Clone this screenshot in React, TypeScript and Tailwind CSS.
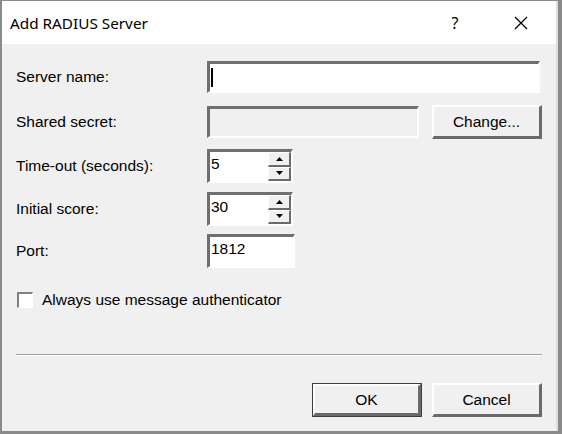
import React from "react";

const sunken =
  "border-t-[3px] border-l-[3px] border-b-2 border-r-2 border-t-[#6f6f6f] border-l-[#6f6f6f] border-b-white border-r-white";

function Raised({ children, className = "" }: { children: React.ReactNode; className?: string }) {
  return (
    <div
      className={
        "flex items-center justify-center bg-[#f0f0f0] border-t-2 border-l-2 border-b-[3px] border-r-[3px] border-t-white border-l-white border-b-[#6a6a6a] border-r-[#6a6a6a] " +
        className
      }
    >
      {children}
    </div>
  );
}

function SpinBtn({ up }: { up: boolean }) {
  return (
    <div className="flex-1 flex items-center justify-center bg-[#f0f0f0] border-t border-l border-b-2 border-r-2 border-t-white border-l-white border-b-[#6a6a6a] border-r-[#6a6a6a]">
      <svg width="7" height="4" viewBox="0 0 7 4">
        {up ? <polygon points="3.5,0 7,4 0,4" fill="#000" /> : <polygon points="0,0 7,0 3.5,4" fill="#000" />}
      </svg>
    </div>
  );
}

function Spinner({ value }: { value: string }) {
  return (
    <div className={"w-[86px] h-[34px] bg-white flex " + sunken}>
      <div className="flex-1 pl-[1px] pt-[2px] leading-[20px] text-black">{value}</div>
      <div className="w-[23px] flex flex-col">
        <SpinBtn up />
        <SpinBtn up={false} />
      </div>
    </div>
  );
}

export default function App() {
  return (
    <div
      className="w-[562px] h-[434px] flex flex-col bg-[#f0f0f0] border-t border-t-[#8a8a8a] border-l-2 border-l-[#8a8a8a] border-b-[3px] border-b-[#8a8a8a] border-r-[4px] border-r-[#8a8a8a] text-[15.5px] text-black"
      style={{ fontFamily: '"Liberation Sans", Arial, sans-serif' }}
    >
      <div
        className="h-[43px] bg-white flex items-center pl-[8px] shrink-0 border-r-[2px] border-r-[#dedede]"
        style={{ fontFamily: '"Noto Sans", "Open Sans", sans-serif' }}
      >
        <span className="text-[15.3px] text-black flex-1 pt-[1px]">Add RADIUS Server</span>
        <span className="text-[16px] w-[20px] text-center mr-[49px]">?</span>
        <svg width="14" height="14" viewBox="0 0 14 14" className="mr-[28px]">
          <path d="M1 1 L13 13 M13 1 L1 13" stroke="#000" strokeWidth="1.3" />
        </svg>
      </div>
      <div className="flex-1 flex flex-col pl-[14px] pr-[14px] border-r-[2px] border-r-[#dedede]">
        <div className="flex items-center mt-[17px] h-[32px]">
          <div className="w-[191px]">Server name:</div>
          <div className={"w-[333px] h-[32px] bg-white flex items-center pl-[1px] " + sunken}>
            <div className="w-[2px] h-[19px] bg-black" />
          </div>
        </div>
        <div className="flex items-center mt-[12px] h-[34px]">
          <div className="w-[191px]">Shared secret:</div>
          <div className={"w-[212px] h-[32px] bg-[#f0f0f0] " + sunken} />
          <Raised className="ml-[13px] w-[110px] h-[34px]">Change...</Raised>
        </div>
        <div className="flex items-center mt-[10px] h-[34px]">
          <div className="w-[191px]">Time-out (seconds):</div>
          <Spinner value="5" />
        </div>
        <div className="flex items-center mt-[9px] h-[34px]">
          <div className="w-[191px]">Initial score:</div>
          <Spinner value="30" />
        </div>
        <div className="flex items-center mt-[8px] h-[34px]">
          <div className="w-[191px]">Port:</div>
          <div className={"w-[88px] h-[34px] bg-white pl-[1px] pt-[2px] leading-[20px] " + sunken}>1812</div>
        </div>
        <div className="flex items-center mt-[24px] h-[16px]">
          <div className="w-[16px] h-[16px] bg-white border-t-2 border-l-2 border-b border-r border-t-[#808080] border-l-[#808080] border-b-white border-r-white ml-[1px]" />
          <div className="ml-[9px]">Always use message authenticator</div>
        </div>
        <div className="mt-[46px] h-[2px] border-t border-t-[#a0a0a0] border-b border-b-white" />
        <div className="flex justify-end mt-[27px] gap-[10px]">
          <div className="w-[110px] h-[34px] border border-[#3c3c3c] flex">
            <Raised className="flex-1">OK</Raised>
          </div>
          <Raised className="w-[110px] h-[34px]">Cancel</Raised>
        </div>
      </div>
    </div>
  );
}
